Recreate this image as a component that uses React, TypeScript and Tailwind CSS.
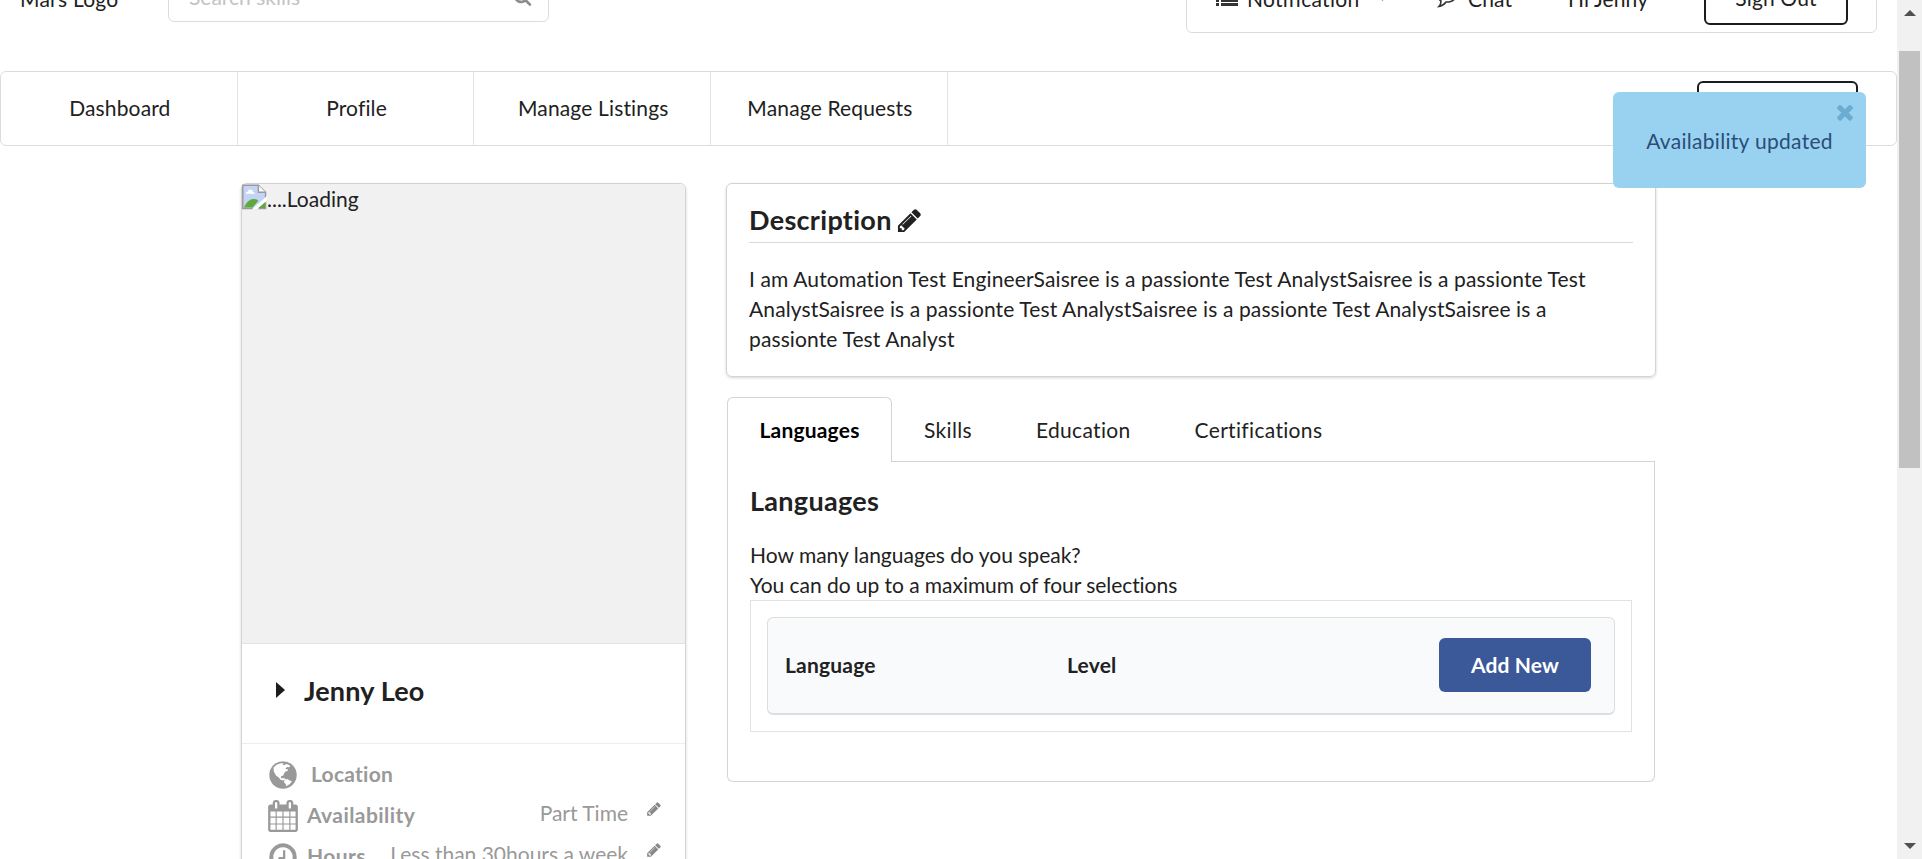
import type { ReactNode } from "react";

const PENCIL =
  "M491 1536l91-91-235-235-91 91v107h128v128h107zM1014 608q0-22-22-22-10 0-17 7l-542 542q-7 7-7 17 0 22 22 22 10 0 17-7l542-542q7-7 7-17zM960 416l416 416-832 832h-416v-416zM1643 512q0 53-37 90l-166 166-416-416 166-165q36-38 90-38 53 0 91 38l235 234q37 39 37 91z";
const CALENDAR =
  "M192 1664h288v-288h-288v288zM544 1664h320v-288h-320v288zM192 1312h288v-320h-288v320zM544 1312h320v-320h-320v320zM192 928h288v-288h-288v288zM928 1664h320v-288h-320v288zM544 928h320v-288h-320v288zM1312 1664h288v-288h-288v288zM928 1312h320v-320h-320v320zM576 448v-288q0-13-9.5-22.5t-22.5-9.5h-64q-13 0-22.5 9.5t-9.5 22.5v288q0 13 9.5 22.5t22.5 9.5h64q13 0 22.5-9.5t9.5-22.5zM1312 1312h288v-320h-288v320zM928 928h320v-288h-320v288zM1312 928h288v-288h-288v288zM1344 448v-288q0-13-9.5-22.5t-22.5-9.5h-64q-13 0-22.5 9.5t-9.5 22.5v288q0 13 9.5 22.5t22.5 9.5h64q13 0 22.5-9.5t9.5-22.5zM1728 384v1280q0 52-38 90t-90 38h-1408q-52 0-90-38t-38-90v-1280q0-52 38-90t90-38h128v-96q0-66 47-113t113-47h64q66 0 113 47t47 113v96h384v-96q0-66 47-113t113-47h64q66 0 113 47t47 113v96h128q52 0 90 38t38 90z";
const CLOCK =
  "M1024 544v448q0 14-9 23t-23 9h-320q-14 0-23-9t-9-23v-64q0-14 9-23t23-9h224v-352q0-14 9-23t23-9h64q14 0 23 9t9 23zM1440 896q0-148-73-273t-198-198-273-73-273 73-198 198-73 273 73 273 198 198 273 73 273-73 198-198 73-273zM1664 896q0 209-103 385.5t-279.5 279.5-385.5 103-385.5-103-279.5-279.5-103-385.5 103-385.5 279.5-279.5 385.5-103 385.5 103 279.5 279.5 103 385.5z";
const SEARCH =
  "M1216 832q0-185-131.500-316.500t-316.500-131.500-316.500 131.500-131.500 316.500 131.500 316.500 316.500 131.500 316.500-131.500 131.500-316.500zM1728 1664q0 52-38 90t-90 38q-54 0-90-38l-343-342q-179 124-399 124-143 0-273.500-55.500t-225-150-150-225-55.500-273.500 55.500-273.500 150-225 225-150 273.500-55.500 273.500 55.500 225 150 150 225 55.500 273.500q0 220-124 399l343 343q37 37 37 90z";
const CLOSE =
  "M1490 1322q0 40-28 68l-136 136q-28 28-68 28t-68-28l-294-294-294 294q-28 28-68 28t-68-28l-136-136q-28-28-28-68t28-68l294-294-294-294q-28-28-28-68t28-68l136-136q28-28 68-28t68 28l294 294 294-294q28-28 68-28t68 28l136 136q28 28 28 68t-28 68l-294 294 294 294q28 28 28 68z";

function Glyph({ d, className }: { d: string; className: string }) {
  return (
    <svg viewBox="0 0 1792 1792" className={"shrink-0 fill-current " + className}>
      <path d={d} />
    </svg>
  );
}

function Globe({ className }: { className: string }) {
  return (
    <svg viewBox="0 0 28 28" className={"shrink-0 " + className}>
      <circle cx="14" cy="14" r="13.700" fill="#999" />
      <path
        fill="#fff"
        d="M4.500 6.500L8 3.600L12 2.200L15 2.400L13.500 3.600L15.500 4.300L17 3L19 3.400L21.500 5L20 6.300L18 6L16.500 7.600L17.500 8.600L18.500 8L19 9.800L16.500 10.500L15 12.500L14.200 14.500L11.800 15.600L12.400 17.500L15 17L17 18.300L14 19.500L11.500 18.800L9.800 16.500L7 14.500L4.800 10.500Z"
      />
      <path fill="#fff" d="M15.500 19L18 18L20.500 19.300L23 20.500L20.500 23.300L17 25.200L16.800 23L15 21.500Z" />
    </svg>
  );
}

function BrokenImage() {
  return (
    <svg viewBox="0 0 26 26" className="h-[26px] w-[25px] shrink-0">
      <path d="M.8.800H17L24.500 8V25H.8Z" fill="#c3d4f5" stroke="#9a9a9a" strokeWidth="1.500" />
      <path d="M17 .8V8H24.500" fill="#fff" stroke="#9a9a9a" strokeWidth="1.500" />
      <path d="M4 9.500q0-2 2-2 1-3 3.500-2 2 .5 2 2.500 2 0 2 1.500z" fill="#fff" />
      <path d="M2 24q4-9 10-9 4 0 5 2L11 24z" fill="#5ea83c" />
      <path d="M10 26L26 12v5L16 26z" fill="#fff" />
      <path d="M17 24.500l7-6v6z" fill="#5ea83c" />
    </svg>
  );
}

function NavItem({ children }: { children: ReactNode }) {
  return (
    <div className="flex w-[236.700px] items-center justify-center border-r border-[#e3e3e4] pb-[2px] pl-[2px] tracking-[0.15px]">
      {children}
    </div>
  );
}

function Header() {
  return (
    <header className="-mt-[33px] flex h-[66px] items-start">
      <div className="w-[168px] pt-[17px] pl-5 tracking-[0.25px]">Mars Logo</div>
      <div className="flex h-[55px] w-[381px] items-center justify-between rounded-md border border-[#dcdcdd] pt-[5px] pr-4 pl-5">
        <span className="text-[#c3c3c3]">Search skills</span>
        <Glyph d={SEARCH} className="-mt-px h-[19px] w-[19px] text-[#8c8c8c]" />
      </div>
      <div className="ml-[637px] flex h-[66px] w-[691px] rounded-md border border-[#dcdcdd] pt-[16px] leading-[30px]">
        <svg viewBox="0 0 22 20" className="mt-[3px] ml-[29px] h-5 w-[22px] fill-[#333]">
          <path d="M0 2h3v3H0zM5 2h17v3H5zM0 7h3v3H0zM5 7h17v3H5zM0 12h3v3H0zM5 12h17v3H5zM0 16h3v3H0zM5 16h17v3H5z" />
        </svg>
        <span className="ml-[9px] w-[113px] tracking-[0.3px]">Notification</span>
        <svg viewBox="0 0 10 6" className="mt-[12px] ml-[18px] h-[5px] w-[9px] fill-[#777]">
          <path d="M0 0h10L5 6z" />
        </svg>
        <svg viewBox="0 0 22 22" className="mt-[2px] ml-[49px] h-[22px] w-[22px] fill-none stroke-[#333] stroke-[1.600]">
          <path d="M5 15C-2 10 2 2 11 2s14 11 2 14c-1 0-2 0-3 0q-3 4-7 4.500q2-2 2-5.500Z" />
        </svg>
        <span className="ml-[10px] w-[46px] tracking-[0.15px]">Chat</span>
        <span className="ml-[54px] w-[81px] whitespace-nowrap tracking-[0.1px]">Hi Jenny</span>
        <div className="-mt-[9px] ml-[55px] flex h-[50px] w-[144px] justify-center rounded-md border-2 border-[#1b1c1d] pt-[6px] tracking-[0.15px]">
          Sign Out
        </div>
      </div>
    </header>
  );
}

function Detail({ icon, label, value }: { icon: ReactNode; label: string; value: string }) {
  return (
    <div className="flex h-[41px] items-center pr-[23px] pl-[25px]">
      <span className="flex w-[31px] justify-center">{icon}</span>
      <span className="-mt-[2px] ml-[9px] font-bold tracking-[0.42px]">{label}</span>
      <span className="-mt-[5px] ml-auto text-[#999]">{value}</span>
      <Glyph d={PENCIL} className="-mt-[13px] ml-[18px] h-4 w-4 text-[#888]" />
    </div>
  );
}

function ProfileCard() {
  return (
    <section className="h-[760px] w-[445px] rounded-md border border-[#d4d4d5] shadow-[0_1px_3px_#d4d4d5]">
      <div className="flex h-[460px] rounded-t-md border-b border-[#e2e2e2] bg-[#f1f1f1]">
        <BrokenImage />
        <span>....Loading</span>
      </div>
      <div className="flex h-[100px] items-center border-b border-[#eee] pb-[5px] pl-[34px] text-[27px] font-bold tracking-[0.15px]">
        <svg viewBox="0 0 9 16" className="-mt-[3px] h-4 w-[9px] fill-[#1b1c1d]">
          <path d="M0 0L9 8L0 16Z" />
        </svg>
        <span className="ml-[19px]">Jenny Leo</span>
      </div>
      <div className="pt-[10px] text-[#999]">
        <div className="flex h-[41px] items-center pl-[27px]">
          <Globe className="h-7 w-7" />
          <span className="-mt-[2px] ml-[14px] font-bold tracking-[0.25px]">Location</span>
        </div>
        <Detail icon={<Glyph d={CALENDAR} className="h-8 w-8" />} label="Availability" value="Part Time" />
        <Detail icon={<Glyph d={CLOCK} className="h-8 w-8" />} label="Hours" value="Less than 30hours a week" />
      </div>
    </section>
  );
}

function Description() {
  return (
    <section className="h-[194px] w-[930px] rounded-md border border-[#d4d4d5] px-[22px] pt-[17px] shadow-[0_1px_3px_#d4d4d5]">
      <h3 className="flex h-[42px] items-center border-b border-[#d9d9da] pb-[3px] text-[27px] font-bold tracking-[0.3px]">
        Description
        <Glyph d={PENCIL} className="ml-1 h-[27px] w-[27px]" />
      </h3>
      <p className="mt-[21px] whitespace-nowrap tracking-[0.12px]">
        I am Automation Test EngineerSaisree is a passionte Test AnalystSaisree is a passionte Test
        <br />
        AnalystSaisree is a passionte Test AnalystSaisree is a passionte Test AnalystSaisree is a
        <br />
        passionte Test Analyst
      </p>
    </section>
  );
}

function Languages() {
  return (
    <section className="mt-5 ml-px w-[928px]">
      <div className="flex h-[65px]">
        <div className="flex w-[165px] items-center justify-center rounded-t-md border border-b-0 border-[#d4d4d5] font-bold tracking-[0.2px] text-black">
          Languages
        </div>
        <div className="flex flex-1 items-center gap-[64px] border-b border-[#d4d4d5] pt-px pl-8 tracking-[0.33px]">
          <span>Skills</span>
          <span>Education</span>
          <span>Certifications</span>
        </div>
      </div>
      <div className="h-[320px] rounded-b-md border border-t-0 border-[#d4d4d5] px-[22px] pt-[21px]">
        <h3 className="text-[27px] leading-9 font-bold tracking-[0.3px]">Languages</h3>
        <p className="mt-[21px]">
          How many languages do you speak?
          <br />
          <span className="tracking-[-0.05px]">You can do up to a maximum of four selections</span>
        </p>
        <div className="h-[132px] border border-[#e2e2e3] p-4">
          <div className="flex h-[98px] items-center rounded-md border border-b-2 border-[#dcdddd] bg-[#f9fafb] pr-[23px] pb-px pl-[17px] font-bold tracking-[0.2px]">
            <span className="w-[282px]">Language</span>
            <span>Level</span>
            <button className="ml-auto h-[54px] w-[152px] rounded-md bg-[#3b5998] font-bold tracking-[0.15px] text-white">Add New</button>
          </div>
        </div>
      </div>
    </section>
  );
}

export default function App() {
  return (
    <div className="relative flex h-[859px] w-[1922px] overflow-hidden bg-white font-['Lato',sans-serif] text-[21px] leading-[30px] text-[#212121] [font-variant-ligatures:none]">
      <main className="w-[1897px]">
        <Header />
        <nav className="mt-[38px] flex h-[75px] rounded-md border border-[#dcdcdd]">
          <NavItem>Dashboard</NavItem>
          <NavItem>Profile</NavItem>
          <NavItem>Manage Listings</NavItem>
          <NavItem>Manage Requests</NavItem>
          <div className="mt-[9px] mr-[38px] ml-auto h-[54px] w-[161px] rounded-md border-2 border-[#1b1c1d]" />
        </nav>
        <div className="mt-[37px] flex items-start gap-[40px] pl-[241px]">
          <ProfileCard />
          <div>
            <Description />
            <Languages />
          </div>
        </div>
      </main>
      <aside className="flex w-[25px] flex-col items-center bg-[#f1f1f1]">
        <svg viewBox="0 0 12 6" className="mt-[10px] h-[6px] w-3 fill-[#505050]">
          <path d="M0 6L6 0L12 6Z" />
        </svg>
        <div className="mt-[35px] h-[417px] w-[21px] bg-[#c1c1c1]" />
        <svg viewBox="0 0 12 6" className="mt-auto mb-[10px] h-[6px] w-3 fill-[#505050]">
          <path d="M0 0L6 6L12 0Z" />
        </svg>
      </aside>
      <div className="absolute top-[92px] left-[1613px] flex h-24 w-[253px] items-center justify-center rounded-md bg-[#99d2f1] pt-px text-[#2b4d78] tracking-[0.3px]">
        Availability updated
        <Glyph d={CLOSE} className="absolute top-[8px] right-[9px] h-6 w-6 text-[#6bacd0]" />
      </div>
    </div>
  );
}
